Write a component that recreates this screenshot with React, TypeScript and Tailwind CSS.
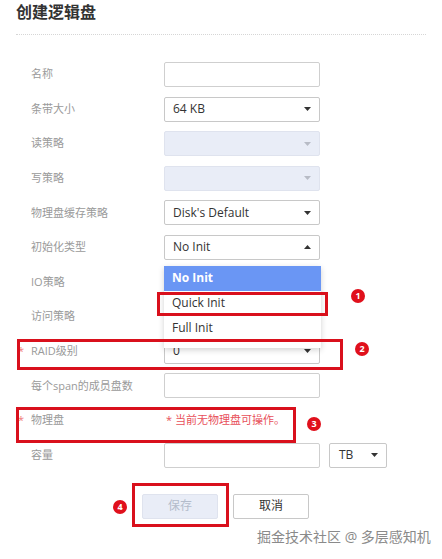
import React from "react";

const font = { fontFamily: '"Open Sans", "Noto Sans CJK SC", sans-serif' };

function Arrow({ up = false, disabled = false }: { up?: boolean; disabled?: boolean }) {
  return (
    <svg width="7" height="4" viewBox="0 0 7 4" className="shrink-0">
      <path
        d={up ? "M0 4 L3.5 0 L7 4 Z" : "M0 0 L7 0 L3.5 4 Z"}
        fill={disabled ? "#b8bcc6" : "#333"}
      />
    </svg>
  );
}

function Label({ text, star = false }: { text: string; star?: boolean }) {
  return (
    <div className="flex w-[164px] shrink-0 items-center pl-[18px] text-[11px] text-[#9a9a9a]">
      <span className="w-[13px] text-[#f07a7a]">{star ? "*" : ""}</span>
      <span>{text}</span>
    </div>
  );
}

function Input() {
  return <div className="h-[25px] w-[156px] rounded-[2px] border border-[#cfcfcf] bg-white" />;
}

function Select({ value, up = false, disabled = false }: { value?: string; up?: boolean; disabled?: boolean }) {
  return (
    <div
      className={`flex h-[25px] w-[156px] items-center justify-between rounded-[2px] border pl-[8px] pr-[8px] text-[12px] text-[#333] ${
        disabled ? "border-[#dfe3ee] bg-[#e9edf7]" : "border-[#c8c8c8] bg-white"
      }`}
    >
      <span>{value}</span>
      <Arrow up={up} disabled={disabled} />
    </div>
  );
}

function Badge({ n, className }: { n: number; className: string }) {
  return (
    <div
      className={`absolute flex h-[14px] w-[14px] items-center justify-center rounded-full bg-[#e0101c] text-[9px] font-bold text-white ${className}`}
    >
      {n}
    </div>
  );
}

export default function App() {
  return (
    <div className="relative h-[559px] w-[442px] overflow-hidden bg-white" style={font}>
      <div className="px-[16px] pt-[1px]">
        <h1 className="text-[16px] font-bold leading-[22px] text-[#333]">创建逻辑盘</h1>
        <div className="mt-[11px] border-t border-dotted border-[#d6d6d6]" />
      </div>

      <div className="mt-[27px] flex flex-col gap-[9.6px]">
        <div className="flex h-[25px] items-center">
          <Label text="名称" />
          <Input />
        </div>
        <div className="flex h-[25px] items-center">
          <Label text="条带大小" />
          <Select value="64 KB" />
        </div>
        <div className="flex h-[25px] items-center">
          <Label text="读策略" />
          <Select disabled />
        </div>
        <div className="flex h-[25px] items-center">
          <Label text="写策略" />
          <Select disabled />
        </div>
        <div className="flex h-[25px] items-center">
          <Label text="物理盘缓存策略" />
          <Select value="Disk's Default" />
        </div>
        <div className="relative z-10 flex h-[25px] items-center">
          <Label text="初始化类型" />
          <div className="relative">
            <Select value="No Init" up />
            <div className="absolute left-0 top-[31px] w-[157px] bg-white pb-[7px] text-[12px] text-[#333] shadow-[0_2px_6px_rgba(0,0,0,0.18)]">
              <div className="flex h-[25px] items-center bg-[#6a96f4] pl-[8px] font-bold text-white">No Init</div>
              <div className="flex h-[25px] items-center pl-[8px]">Quick Init</div>
              <div className="flex h-[25px] items-center pl-[8px]">Full Init</div>
            </div>
          </div>
        </div>
        <div className="flex h-[25px] items-center">
          <Label text="IO策略" />
        </div>
        <div className="flex h-[25px] items-center">
          <Label text="访问策略" />
        </div>
        <div className="flex h-[25px] items-center">
          <Label text="RAID级别" star />
          <Select value="0" />
        </div>
        <div className="flex h-[25px] items-center">
          <Label text="每个span的成员盘数" />
          <Input />
        </div>
        <div className="flex h-[25px] items-center">
          <Label text="物理盘" star />
          <span className="pl-[2px] text-[11px] text-[#e8505a]">* 当前无物理盘可操作。</span>
        </div>
        <div className="flex h-[25px] items-center">
          <Label text="容量" />
          <Input />
          <div className="ml-[9px] flex h-[25px] w-[58px] items-center justify-between rounded-[2px] border border-[#c8c8c8] pl-[9px] pr-[8px] text-[12px] text-[#333]">
            <span>TB</span>
            <Arrow />
          </div>
        </div>
      </div>

      <div className="mt-[26.4px] flex gap-[15px] pl-[142px]">
        <button className="h-[25px] w-[76px] rounded-[2px] border border-[#dfe3ee] bg-[#e9edf7] text-[12px] text-[#b4bccb]">
          保存
        </button>
        <button className="h-[25px] w-[76px] rounded-[2px] border border-[#c8c8c8] bg-white text-[12px] text-[#333]">
          取消
        </button>
      </div>

      {/* annotations */}
      <div className="absolute left-[157px] top-[292px] z-20 h-[24px] w-[171px] border-[3px] border-[#d9101c]" />
      <div className="absolute left-[17px] top-[339px] z-20 h-[31px] w-[326px] border-[3px] border-[#d9101c]" />
      <div className="absolute left-[16px] top-[407px] z-20 h-[36px] w-[280px] border-[3px] border-[#d9101c]" />
      <div className="absolute left-[132px] top-[483px] z-20 h-[44px] w-[97px] border-[3px] border-[#d9101c]" />
      <Badge n={1} className="left-[351px] top-[289px] z-20" />
      <Badge n={2} className="left-[355px] top-[342px] z-20" />
      <Badge n={3} className="left-[307px] top-[417px] z-20" />
      <Badge n={4} className="left-[113px] top-[500px] z-20" />

      <div className="absolute left-[257px] top-[528px] text-[14px] leading-[18px] text-[#8a8a8a]">
        掘金技术社区 @ 多层感知机
      </div>
    </div>
  );
}
